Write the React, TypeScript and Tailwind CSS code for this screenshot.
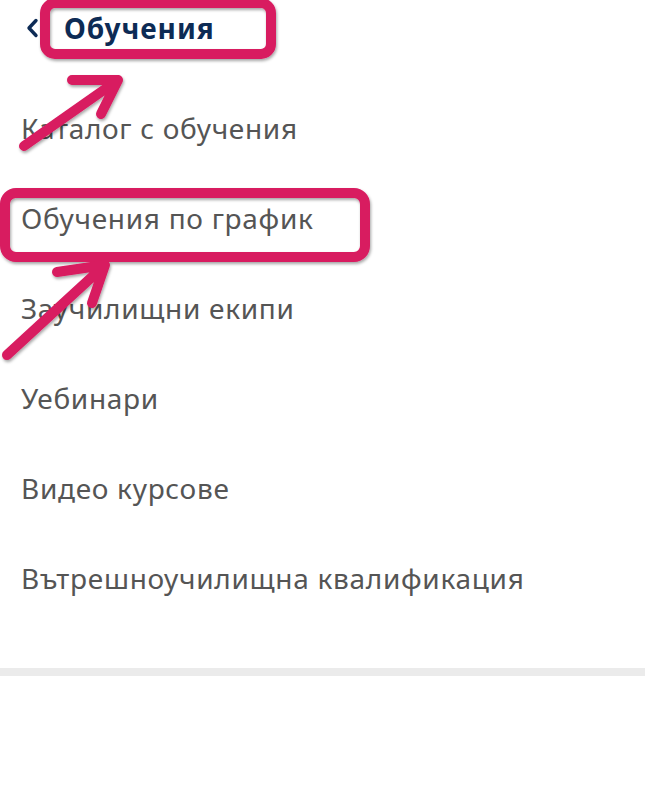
import type { FunctionComponent } from 'react';

const items = [
    'Каталог с обучения',
    'Обучения по график',
    'Заучилищни екипи',
    'Уебинари',
    'Видео курсове',
    'Вътрешноучилищна квалификация',
];

const PINK = '#d81b60';

// annotation layer drawn over the menu
const Annotations: FunctionComponent = () => (
    <svg
        className="absolute inset-0 pointer-events-none"
        width={645}
        height={795}
        viewBox="0 0 645 795"
    >
        <defs>
            <filter id="sh" x="-10%" y="-10%" width="120%" height="130%">
                <feDropShadow dx="1" dy="2" stdDeviation="1.5" floodColor="#000" floodOpacity="0.35"/>
            </filter>
        </defs>
        <g fill="none" stroke={PINK} strokeLinecap="round" strokeLinejoin="round" filter="url(#sh)">
            <rect x={45} y={3} width={226} height={51} rx={10} strokeWidth={10}/>
            <path d="M24 146 L118 80 M72 80 L118 80 L101 114" strokeWidth={10}/>
            <rect x={5} y={193} width={360} height={64} rx={11} strokeWidth={10}/>
            <path d="M7 355 L105 265 M57 272 L105 265 L92 303" strokeWidth={10}/>
        </g>
    </svg>
);

const App: FunctionComponent = () => {
    return (
        <div
            lang="bg"
            className="relative w-[645px] h-[795px] bg-white overflow-hidden"
            style={{ fontFamily: '"Noto Sans", "Open Sans", sans-serif' }}
        >
            <div className="flex items-center h-[56px] pl-[26px]">
                <svg width="14" height="20" viewBox="0 0 14 20" className="mr-[24px]">
                    <path d="M10 2.5 L3 10 L10 17.5" fill="none" stroke="#0d2b55" strokeWidth="3.4" strokeLinecap="round" strokeLinejoin="round"/>
                </svg>
                <span className="text-[28px] font-bold tracking-[1px] text-[#0d2b55] leading-none">
                    Обучения
                </span>
            </div>
            <ul className="mt-[27px]">
                {items.map((label) => (
                    <li key={label} className="flex items-center h-[90px] pl-[21px] text-[28px] tracking-[0.7px] text-[#555555]">
                        {label}
                    </li>
                ))}
            </ul>
            <div className="mt-[45px] h-[8px] bg-[#ebebeb]"/>
            <Annotations/>
        </div>
    );
};

export default App;
